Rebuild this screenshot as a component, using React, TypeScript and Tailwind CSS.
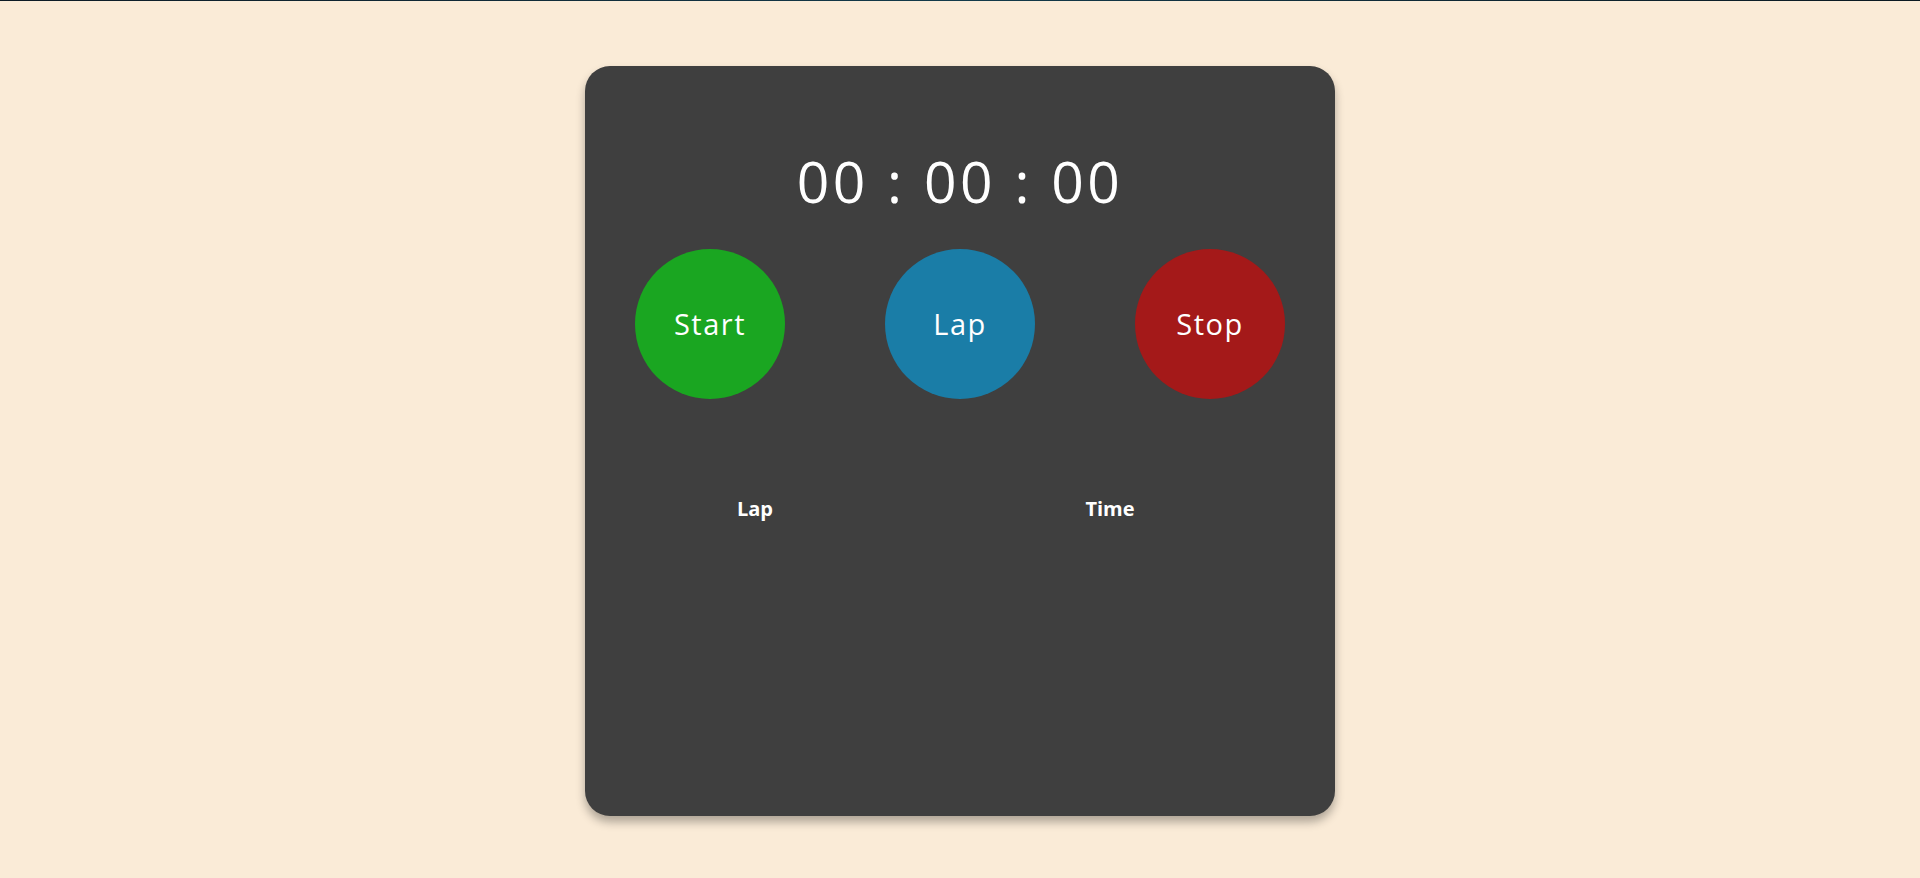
import { useEffect, useRef, useState } from 'react';

type LapRow = { lap: number; time: string };

const pad = (n: number) => String(n).padStart(2, '0');

// mm : ss : cs
const formatTime = (ms: number) => {
  const minutes = Math.floor(ms / 60000);
  const seconds = Math.floor((ms % 60000) / 1000);
  const centis = Math.floor((ms % 1000) / 10);
  return `${pad(minutes)} : ${pad(seconds)} : ${pad(centis)}`;
};

function RoundButton({
  label,
  color,
  onClick,
}: {
  label: string;
  color: string;
  onClick: () => void;
}) {
  return (
    <button
      onClick={onClick}
      className={`w-[150px] h-[150px] rounded-full ${color} text-white text-[29px] tracking-[1.5px] font-normal cursor-pointer`}
    >
      {label}
    </button>
  );
}

export default function App() {
  const [elapsed, setElapsed] = useState(0);
  const [running, setRunning] = useState(false);
  const [laps, setLaps] = useState<LapRow[]>([]);
  const startRef = useRef(0);

  useEffect(() => {
    if (!running) return;
    startRef.current = Date.now() - elapsed;
    const id = setInterval(() => setElapsed(Date.now() - startRef.current), 10);
    return () => clearInterval(id);
    // eslint-disable-next-line react-hooks/exhaustive-deps
  }, [running]);

  const addLap = () => {
    if (!running) return;
    setLaps(prev => [...prev, { lap: prev.length + 1, time: formatTime(elapsed) }]);
  };

  return (
    <div className="min-h-[878px] bg-[#faebd7] font-['Open_Sans',sans-serif]">
      <div className="h-px bg-gradient-to-r from-[#0c1a24] via-[#123a4a] to-[#0a1820]" />

      <div className="flex justify-center pt-[65px]">
        <div className="w-[750px] h-[750px] rounded-[25px] bg-[#3f3f3f] shadow-[0_6px_10px_rgba(0,0,0,0.3)] flex flex-col">
          <div className="mt-[75px] h-[80px] leading-[80px] text-center text-white text-[57px] font-normal tracking-[3.5px]">
            {formatTime(elapsed)}
          </div>

          <div className="mt-[28px] px-[50px] flex justify-between">
            <RoundButton label="Start" color="bg-[#1aa621]" onClick={() => setRunning(true)} />
            <RoundButton label="Lap" color="bg-[#1a7da7]" onClick={addLap} />
            <RoundButton label="Stop" color="bg-[#a41919]" onClick={() => setRunning(false)} />
          </div>

          <div className="mt-[96px] grid grid-cols-[340px_370px] text-center text-white text-[20px] font-bold leading-[28px]">
            <div>Lap</div>
            <div>Time</div>
            {laps.map(row => (
              <div key={row.lap} className="contents">
                <div className="font-normal">{row.lap}</div>
                <div className="font-normal">{row.time}</div>
              </div>
            ))}
          </div>
        </div>
      </div>
    </div>
  );
}
